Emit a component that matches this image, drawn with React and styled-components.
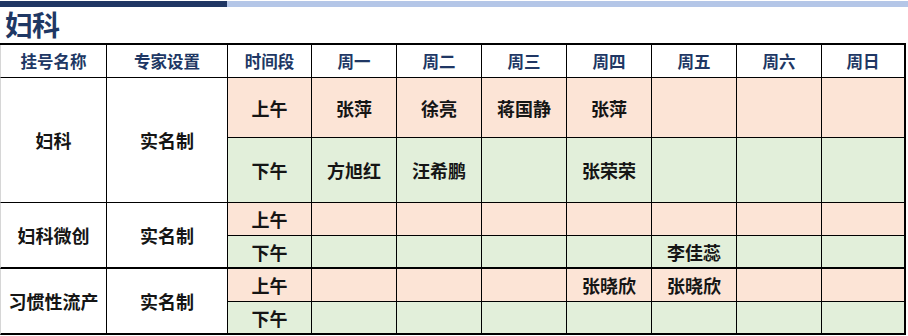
import React from "react";
import styled, { createGlobalStyle } from "styled-components";

const GlobalStyle = createGlobalStyle`
  body {
    margin: 0;
    background: #fff;
    font-family: "Noto Sans CJK SC", "Noto Sans", sans-serif;
  }
`;

const days = ["周一", "周二", "周三", "周四", "周五", "周六", "周日"];

const groups = [
  {
    name: "妇科",
    mode: "实名制",
    heavy: false,
    am: ["张萍", "徐亮", "蒋国静", "张萍", "", "", ""],
    pm: ["方旭红", "汪希鹏", "", "张荣荣", "", "", ""]
  },
  {
    name: "妇科微创",
    mode: "实名制",
    heavy: true,
    am: ["", "", "", "", "", "", ""],
    pm: ["", "", "", "", "李佳蕊", "", ""]
  },
  {
    name: "习惯性流产",
    mode: "实名制",
    heavy: true,
    am: ["", "", "", "张晓欣", "张晓欣", "", ""],
    pm: ["", "", "", "", "", "", ""]
  }
];

const App = () => (
  <Page>
    <GlobalStyle />
    <TopBar>
      <BarDark />
      <BarLight />
    </TopBar>
    <Title>妇科</Title>
    <Grid>
      <Head $first>挂号名称</Head>
      <Head>专家设置</Head>
      <Head>时间段</Head>
      {days.map((d, i) => (
        <Head key={d} $last={i === days.length - 1}>
          {d}
        </Head>
      ))}
      {groups.map(g => (
        <React.Fragment key={g.name}>
          <Label $first $span $heavy={g.heavy}>
            {g.name}
          </Label>
          <Label $span $heavy={g.heavy}>
            {g.mode}
          </Label>
          <Slot $tone="am">上午</Slot>
          {g.am.map((n, i) => (
            <Slot key={"am" + i} $tone="am" $last={i === 6}>
              {n}
            </Slot>
          ))}
          <Slot $tone="pm" $heavy={g.heavy}>
            下午
          </Slot>
          {g.pm.map((n, i) => (
            <Slot key={"pm" + i} $tone="pm" $heavy={g.heavy} $last={i === 6}>
              {n}
            </Slot>
          ))}
        </React.Fragment>
      ))}
    </Grid>
  </Page>
);

export default App;

const Page = styled.div`
  width: 908px;
  padding-top: 1px;
`;

const TopBar = styled.div`
  display: flex;
  height: 6px;
`;

const BarDark = styled.div`
  width: 227px;
  background: #203764;
`;

const BarLight = styled.div`
  flex: 1;
  background: #b4c6e7;
`;

const Title = styled.div`
  height: 36px;
  line-height: 34px;
  padding-left: 5px;
  font-size: 28px;
  font-weight: 700;
  color: #1f3864;
  letter-spacing: -1px;
`;

const Grid = styled.div`
  width: 906px;
  display: grid;
  grid-template-columns: 107px 121px 84px repeat(6, 85px) 84px;
  grid-template-rows: 33px 60px 65px 33px 33px 33px 33px;
  border-top: 2px solid #000;
`;

const Cell = styled.div`
  box-sizing: border-box;
  display: flex;
  align-items: center;
  justify-content: center;
  font-weight: 700;
  border-right: ${p => (p.$last ? "2px" : "1px")} solid #000;
  border-bottom: ${p => (p.$heavy ? "2px" : "1px")} solid #000;
  border-left: ${p => (p.$first ? "1px solid #d6d6d6" : "none")};
`;

const Head = styled(Cell)`
  background: #fff;
  color: #203764;
  font-size: 16.5px;
`;

const Label = styled(Cell)`
  grid-row: ${p => (p.$span ? "span 2" : "auto")};
  background: #fff;
  color: #151515;
  font-size: 18px;
`;

const Slot = styled(Cell)`
  background: ${p => (p.$tone === "am" ? "#fce4d6" : "#e2efda")};
  color: #151515;
  font-size: 18px;
`;
